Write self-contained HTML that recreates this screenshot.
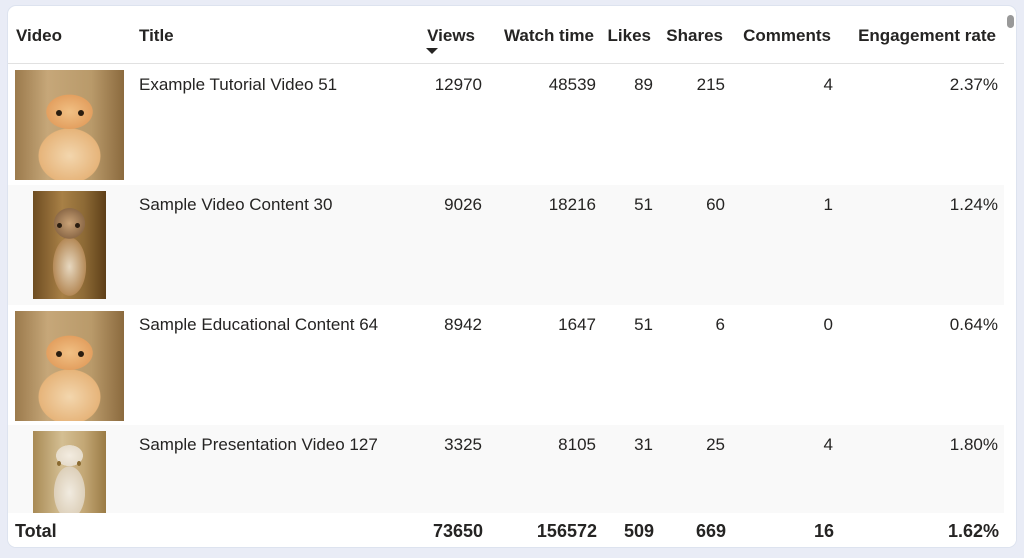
<!DOCTYPE html>
<html><head><style>
*{margin:0;padding:0;box-sizing:border-box}
body{width:1024px;height:558px;background:#e9ecf6;font-family:"Liberation Sans",sans-serif;color:#252423;position:relative;overflow:hidden}
.card{position:absolute;left:7px;top:5px;width:1010px;height:543px;background:#fff;border-radius:9px;border:1px solid #dde3ef;overflow:hidden}
.t{position:absolute;font-size:17px;white-space:nowrap}
.h{font-weight:bold;font-size:17px;top:20px}
.r{text-align:right}
.row{position:absolute;left:0;width:996px;height:120px}
.alt{background:#f9f9f9}
.cat{position:absolute}
.c1{background:radial-gradient(ellipse 30% 22% at 50% 38%,#f1c084 0,#e3a060 70%,transparent 72%),radial-gradient(ellipse 40% 35% at 50% 78%,#f3d6ad 0,#e6b47a 70%,transparent 72%),linear-gradient(90deg,#9b7a4c,#c6a779 30%,#b99a6a 70%,#8b6a3e);}
.c2{background:radial-gradient(ellipse 30% 20% at 50% 30%,#c9a277 0,#8d6a48 70%,transparent 72%),radial-gradient(ellipse 32% 38% at 50% 70%,#e7d8c0 0,#b58a58 70%,transparent 72%),linear-gradient(90deg,#6e4d22,#a88046 40%,#8d6a36 70%,#5e3f18);}
.c3{background:radial-gradient(ellipse 26% 18% at 50% 30%,#f3ece0 0,#e6dccb 70%,transparent 72%),radial-gradient(ellipse 30% 45% at 50% 75%,#f1ebe0 0,#ddd0ba 70%,transparent 72%),linear-gradient(90deg,#a88a55,#d4bf93 40%,#c3a775 70%,#9a7b45);}
.eye{position:absolute;width:6px;height:6px;border-radius:50%;background:#2a1d10}
</style></head><body>
<div class="card">
<div class="t h" style="left:8px">Video</div>
<div class="t h" style="left:131px">Title</div>
<div class="t h r" style="right:541px">Views</div>
<div style="position:absolute;left:418px;top:42px;border-left:6px solid transparent;border-right:6px solid transparent;border-top:6px solid #252423"></div>
<div class="t h r" style="right:422px">Watch time</div>
<div class="t h r" style="right:365px">Likes</div>
<div class="t h r" style="right:293px">Shares</div>
<div class="t h r" style="right:185px">Comments</div>
<div class="t h r" style="right:20px">Engagement rate</div>
<div style="position:absolute;left:0;top:57px;width:996px;height:1px;background:#e1e1e1"></div>
<div style="position:absolute;left:999px;top:9px;width:7px;height:13px;border-radius:4px;background:#999"></div>

<div class="row" style="top:59px">
<div class="cat c1" style="left:7px;top:5px;width:109px;height:110px"><div class="eye" style="left:41px;top:40px"></div><div class="eye" style="left:63px;top:40px"></div></div>
<div class="t" style="left:131px;top:10px">Example Tutorial Video 51</div>
<div class="t r" style="right:522px;top:10px">12970</div>
<div class="t r" style="right:408px;top:10px">48539</div>
<div class="t r" style="right:351px;top:10px">89</div>
<div class="t r" style="right:279px;top:10px">215</div>
<div class="t r" style="right:171px;top:10px">4</div>
<div class="t r" style="right:6px;top:10px">2.37%</div>
</div>
<div class="row alt" style="top:179px">
<div class="cat c2" style="left:25px;top:6px;width:73px;height:108px"><div class="eye" style="left:24px;top:32px;width:5px;height:5px"></div><div class="eye" style="left:42px;top:32px;width:5px;height:5px"></div></div>
<div class="t" style="left:131px;top:10px">Sample Video Content 30</div>
<div class="t r" style="right:522px;top:10px">9026</div>
<div class="t r" style="right:408px;top:10px">18216</div>
<div class="t r" style="right:351px;top:10px">51</div>
<div class="t r" style="right:279px;top:10px">60</div>
<div class="t r" style="right:171px;top:10px">1</div>
<div class="t r" style="right:6px;top:10px">1.24%</div>
</div>
<div class="row" style="top:299px">
<div class="cat c1" style="left:7px;top:6px;width:109px;height:110px"><div class="eye" style="left:41px;top:40px"></div><div class="eye" style="left:63px;top:40px"></div></div>
<div class="t" style="left:131px;top:10px">Sample Educational Content 64</div>
<div class="t r" style="right:522px;top:10px">8942</div>
<div class="t r" style="right:408px;top:10px">1647</div>
<div class="t r" style="right:351px;top:10px">51</div>
<div class="t r" style="right:279px;top:10px">6</div>
<div class="t r" style="right:171px;top:10px">0</div>
<div class="t r" style="right:6px;top:10px">0.64%</div>
</div>
<div class="row alt" style="top:419px;height:88px">
<div class="cat c3" style="left:25px;top:6px;width:73px;height:82px"><div class="eye" style="left:24px;top:30px;width:4px;height:5px;background:#8a6a30"></div><div class="eye" style="left:44px;top:30px;width:4px;height:5px;background:#8a6a30"></div></div>
<div class="t" style="left:131px;top:10px">Sample Presentation Video 127</div>
<div class="t r" style="right:522px;top:10px">3325</div>
<div class="t r" style="right:408px;top:10px">8105</div>
<div class="t r" style="right:351px;top:10px">31</div>
<div class="t r" style="right:279px;top:10px">25</div>
<div class="t r" style="right:171px;top:10px">4</div>
<div class="t r" style="right:6px;top:10px">1.80%</div>
</div>
<div style="position:absolute;left:0;top:507px;width:1010px;height:40px;background:#fff">
<div class="t" style="left:7px;top:8px;font-weight:bold;font-size:18px">Total</div>
<div class="t r" style="right:535px;top:8px;font-weight:bold;font-size:18px">73650</div>
<div class="t r" style="right:421px;top:8px;font-weight:bold;font-size:18px">156572</div>
<div class="t r" style="right:364px;top:8px;font-weight:bold;font-size:18px">509</div>
<div class="t r" style="right:292px;top:8px;font-weight:bold;font-size:18px">669</div>
<div class="t r" style="right:184px;top:8px;font-weight:bold;font-size:18px">16</div>
<div class="t r" style="right:19px;top:8px;font-weight:bold;font-size:18px">1.62%</div>
</div>
</div>
</body></html>
